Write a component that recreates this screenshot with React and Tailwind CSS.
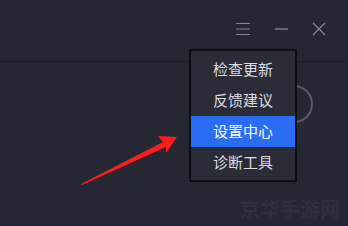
import React from 'react'

const items = ['检查更新', '反馈建议', '设置中心', '诊断工具']

export default function App() {
  return (
    <div
      className="relative w-[348px] h-[226px] overflow-hidden bg-[#252733]"
      style={{ fontFamily: '"Noto Sans CJK SC", "Noto Sans", sans-serif' }}
    >
      {/* title bar */}
      <div className="h-[62px] border-b border-[#1b1c25] flex items-start justify-end pt-[22px] pr-[22px] gap-[23px] text-[#858895]">
        <svg width="16" height="14" viewBox="0 0 16 14" className="mt-[0px]">
          <path d="M1 1.5h14M1 7h14M1 12.5h14" stroke="currentColor" strokeWidth="1.2" />
        </svg>
        <svg width="15" height="14" viewBox="0 0 15 14">
          <path d="M1 7h13" stroke="currentColor" strokeWidth="1.3" />
        </svg>
        <svg width="14" height="14" viewBox="0 0 14 14">
          <path d="M1 1l12 12M13 1L1 13" stroke="currentColor" strokeWidth="1.3" />
        </svg>
      </div>

      {/* round button partly under the menu */}
      <div className="absolute left-[275px] top-[85px] w-[38px] h-[38px] rounded-full border-2 border-[#5a5d68]" />

      {/* dropdown menu */}
      <div className="absolute left-[189px] top-[49px] w-[108px] border-2 border-[#0d0e12] bg-[#2a2c38] pt-[3px] pb-[2px]">
        {items.map((t, i) => (
          <div
            key={t}
            className={
              'h-[31px] flex items-center justify-center text-[15px] ' +
              (i === 2 ? 'bg-[#2a6df5] text-white' : 'text-[#dcdde2]')
            }
          >
            {t}
          </div>
        ))}
      </div>

      {/* red arrow */}
      <svg className="absolute left-0 top-0" width="348" height="226" viewBox="0 0 348 226">
        <polygon
          points="177,137 158,136 163,142 81,184 82,185 166,147 166,153"
          fill="#ff1c1c"
        />
      </svg>

      {/* watermark */}
      <div className="absolute left-[240px] top-[196px] text-[20px] font-bold tracking-[0px] text-[#2d303e] leading-[26px]">
        京华手游网
      </div>
    </div>
  )
}
